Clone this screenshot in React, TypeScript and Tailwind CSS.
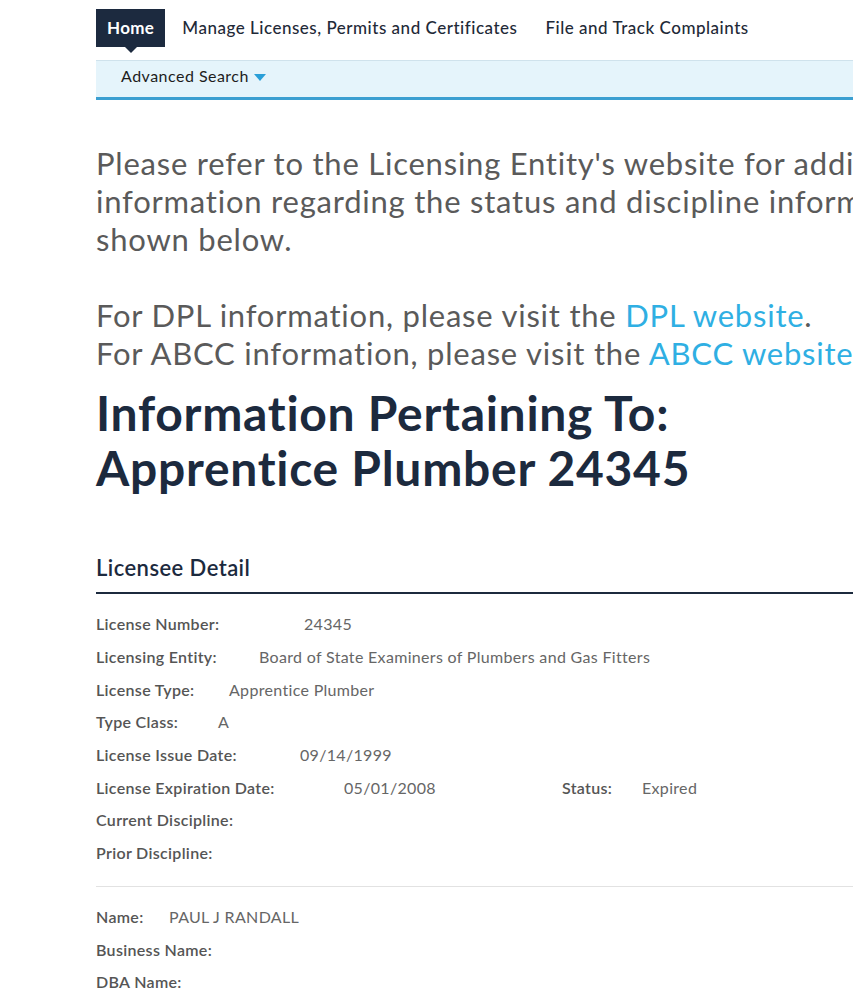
const detailRows = [
  { label: 'License Number:', value: '24345', at: 'w-[208px]' },
  { label: 'Licensing Entity:', value: 'Board of State Examiners of Plumbers and Gas Fitters', at: 'w-[163px]' },
  { label: 'License Type:', value: 'Apprentice Plumber', at: 'w-[133px]' },
  { label: 'Type Class:', value: 'A', at: 'w-[122px]' },
  { label: 'License Issue Date:', value: '09/14/1999', at: 'w-[204px]' },
];

const disciplineRows = ['Current Discipline:', 'Prior Discipline:'];

const personRows = [
  { label: 'Name:', value: 'PAUL J RANDALL', at: 'w-[73px]' },
  { label: 'Business Name:', value: '', at: '' },
  { label: 'DBA Name:', value: '', at: '' },
];

export default function App() {
  return (
    <div className="w-[853px] overflow-hidden bg-white font-['Lato',sans-serif]">
      <div className="ml-[96px] w-[1100px]">
        {/* ── Top nav ── */}
        <nav className="flex items-center h-[60px] pt-[9px] pb-[13px]">
          <div className="relative h-[38px] px-[11px] flex items-center bg-[#1c2a3f] text-white font-bold text-[17px] tracking-[0.02em]">
            Home
            <span className="absolute left-1/2 -translate-x-1/2 top-full w-0 h-0 border-x-[6px] border-x-transparent border-t-[6px] border-t-[#1c2a3f]" />
          </div>
          <a className="ml-[17px] text-[17px] font-medium tracking-[0.03em] text-[#1f2a38]">Manage Licenses, Permits and Certificates</a>
          <a className="ml-[28px] text-[17px] font-medium tracking-[0.03em] text-[#1f2a38]">File and Track Complaints</a>
        </nav>

        {/* ── Sub bar ── */}
        <div className="h-[40px] bg-[#e5f4fb] border-t border-[#cfe2ec] border-b-[3px] border-b-[#3b9fd1] flex items-center pl-[25px] pb-[6px]">
          <span className="text-[16px] tracking-[0.03em] text-[#1d1d1d]">Advanced Search</span>
          <span className="ml-[5px] mt-[3px] w-0 h-0 border-x-[6px] border-x-transparent border-t-[7px] border-t-[#2a9fd8]" />
        </div>

        {/* ── Notice ── */}
        <div className="mt-[44px] text-[31px] leading-[38px] tracking-[0.025em] text-[#5a5a5a] whitespace-nowrap">
          <p>
            Please refer to the Licensing Entity's website for additional
            <br />
            information regarding the status and discipline information
            <br />
            shown below.
          </p>
          <p className="mt-[38px]">
            For DPL information, please visit the <a className="text-[#2fafe3]">DPL website</a>.
            <br />
            For ABCC information, please visit the <a className="text-[#2fafe3]">ABCC website</a>.
          </p>
        </div>

        <h1 className="mt-[13px] text-[48px] leading-[55px] font-bold tracking-[0.015em] text-[#1c2a3e]">
          Information Pertaining To:
          <br />
          Apprentice Plumber 24345
        </h1>

        {/* ── Licensee Detail ── */}
        <section className="mt-[59px]">
          <h2 className="text-[22px] leading-[28px] font-semibold tracking-[0.02em] text-[#1c2a3e] pb-[10px] border-b-2 border-[#1c2a3e]">
            Licensee Detail
          </h2>

          <div className="pt-[14px] pb-[16px] text-[16px] tracking-[0.02em] text-[#666]">
            {detailRows.map(({ label, value, at }) => (
              <div key={label} className="flex h-[32.7px] items-center">
                <span className={`${at} font-semibold text-[#555]`}>{label}</span>
                <span>{value}</span>
              </div>
            ))}
            <div className="flex h-[32.7px] items-center">
              <span className="w-[248px] font-semibold text-[#555]">License Expiration Date:</span>
              <span className="w-[218px]">05/01/2008</span>
              <span className="w-[80px] font-semibold text-[#555]">Status:</span>
              <span>Expired</span>
            </div>
            {disciplineRows.map((label) => (
              <div key={label} className="flex h-[32.7px] items-center">
                <span className="font-semibold text-[#555]">{label}</span>
              </div>
            ))}
          </div>

          <div className="border-t border-[#e2e2e2] pt-[14px] text-[16px] tracking-[0.02em] text-[#666]">
            {personRows.map(({ label, value, at }) => (
              <div key={label} className="flex h-[32.7px] items-center">
                <span className={`${at} font-semibold text-[#555]`}>{label}</span>
                {value && <span>{value}</span>}
              </div>
            ))}
          </div>
        </section>
      </div>
    </div>
  );
}
